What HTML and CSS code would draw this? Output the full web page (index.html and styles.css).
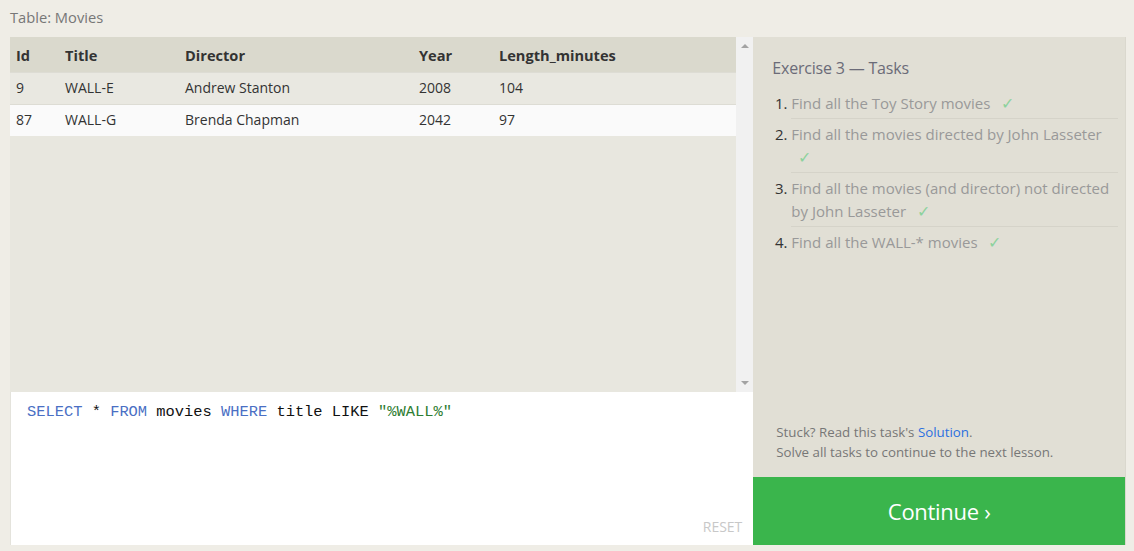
FILE: index.html
```html
<!DOCTYPE html>
<html>
<head>
<meta charset="utf-8">
<link rel="stylesheet" href="styles.css">
</head>
<body>
<div class="page">
  <div class="caption">Table: Movies</div>
  <div class="main">
    <div class="left">
      <div class="table-area">
        <div class="table-wrap">
          <table class="results">
            <thead>
              <tr><th class="c-id">Id</th><th class="c-title">Title</th><th class="c-dir">Director</th><th class="c-year">Year</th><th>Length_minutes</th></tr>
            </thead>
            <tbody>
              <tr class="odd"><td>9</td><td>WALL-E</td><td>Andrew Stanton</td><td>2008</td><td>104</td></tr>
              <tr class="even"><td>87</td><td>WALL-G</td><td>Brenda Chapman</td><td>2042</td><td>97</td></tr>
            </tbody>
          </table>
        </div>
        <div class="scrollbar">
          <span class="arrow up"></span>
          <span class="arrow down"></span>
        </div>
      </div>
      <div class="editor">
        <div class="code"><span class="kw">SELECT</span> * <span class="kw">FROM</span> movies <span class="kw">WHERE</span> title LIKE <span class="str">"%WALL%"</span></div>
        <div class="reset">RESET</div>
      </div>
    </div>
    <div class="right">
      <div class="tasks">
        <div class="tasks-title">Exercise 3 — Tasks</div>
        <ol class="task-list">
          <li><span class="task-text">Find all the Toy Story movies</span> <span class="check">✓</span></li>
          <li><span class="task-text">Find all the movies directed by John Lasseter</span> <span class="check">✓</span></li>
          <li><span class="task-text">Find all the movies (and director) not directed by John Lasseter</span> <span class="check">✓</span></li>
          <li><span class="task-text">Find all the WALL-* movies</span> <span class="check">✓</span></li>
        </ol>
      </div>
      <div class="stuck">
        <div>Stuck? Read this task's <a class="solution">Solution</a>.</div>
        <div>Solve all tasks to continue to the next lesson.</div>
      </div>
      <div class="continue">Continue ›</div>
    </div>
  </div>
</div>
</body>
</html>
```
FILE: styles.css
```css
html, body {
  margin: 0;
  padding: 0;
  background: #efede6;
  font-family: "Open Sans", "Noto Sans", sans-serif;
  color: #333;
}
.page {
  width: 1116px;
  margin-left: 10px;
}
.caption {
  height: 37px;
  line-height: 34px;
  font-size: 14.7px;
  color: #777;
}
.main {
  display: flex;
  height: 508px;
}
.left {
  width: 744px;
  display: flex;
  flex-direction: column;
}
.table-area {
  height: 355px;
  display: flex;
  background: #e8e7df;
}
.table-wrap {
  flex: 1;
}
.results {
  width: 100%;
  border-collapse: collapse;
  font-size: 14px;
}
.results th {
  text-align: left;
  font-weight: 700;
  font-size: 14.6px;
  height: 35px;
  padding: 0 0 0 6px;
  background: #dad9cd;
  color: #333;
}
.results td {
  height: 29px;
  padding: 0 0 2px 6px;
  color: #333;
  border-top: 1px solid #dddcd4;
}
.results .c-id { width: 43px; }
.results .c-title { width: 114px; }
.results .c-dir { width: 228px; }
.results .c-year { width: 74px; }
.results tr.odd td { background: #e9e8e1; }
.results tr.even td { background: #fafafa; }
.scrollbar {
  width: 17px;
  background: #f1f1f1;
  display: flex;
  flex-direction: column;
  justify-content: space-between;
  align-items: center;
  padding: 7px 0 7px;
  box-sizing: border-box;
}
.arrow {
  width: 0;
  height: 0;
  border-left: 4px solid transparent;
  border-right: 4px solid transparent;
}
.arrow.up { border-bottom: 4px solid #a3a3a3; }
.arrow.down { border-top: 4px solid #a3a3a3; }
.editor {
  flex: 1;
  background: #fff;
  display: flex;
  flex-direction: column;
  justify-content: space-between;
  padding: 10px 11px 9px 16px;
  border-left: 1px solid #e4e3dc;
}
.code {
  font-family: "Liberation Mono", "DejaVu Sans Mono", monospace;
  font-size: 15.4px;
  line-height: 20px;
  color: #111;
}
.kw { color: #4a6fc4; }
.str { color: #2e7d32; }
.reset {
  align-self: flex-end;
  font-size: 14px;
  color: #c8c8c8;
}
.right {
  width: 372px;
  background: #e1dfd5;
  display: flex;
  flex-direction: column;
  border-right: 1px solid #dad8ce;
}
.tasks {
  flex: 1;
  padding: 21px 7px 0 23px;
}
.tasks-title {
  font-size: 16px;
  color: #6b6b78;
  line-height: 20px;
  letter-spacing: -0.2px;
  margin-left: -4px;
}
.task-list {
  margin: 10px 0 0 0;
  padding: 0 0 0 15px;
  font-size: 15px;
}
.task-list li {
  color: #333;
  line-height: 23px;
  padding: 4px 0 3px 0;
  border-bottom: 1px solid #d5d3c9;
}
.task-list li:last-child { border-bottom: none; }
.task-text { color: #999; }
.check {
  color: #8dd29d;
  font-size: 16px;
  line-height: 1;
  margin-left: 7px;
}
.stuck {
  padding: 0 14px 15px 23px;
  font-size: 13.3px;
  line-height: 20px;
  color: #777;
}
.solution { color: #2b6fe0; }
.continue {
  height: 68px;
  background: #3ab54c;
  color: #fff;
  font-size: 22px;
  display: flex;
  align-items: center;
  justify-content: center;
  letter-spacing: -0.3px;
}
```
